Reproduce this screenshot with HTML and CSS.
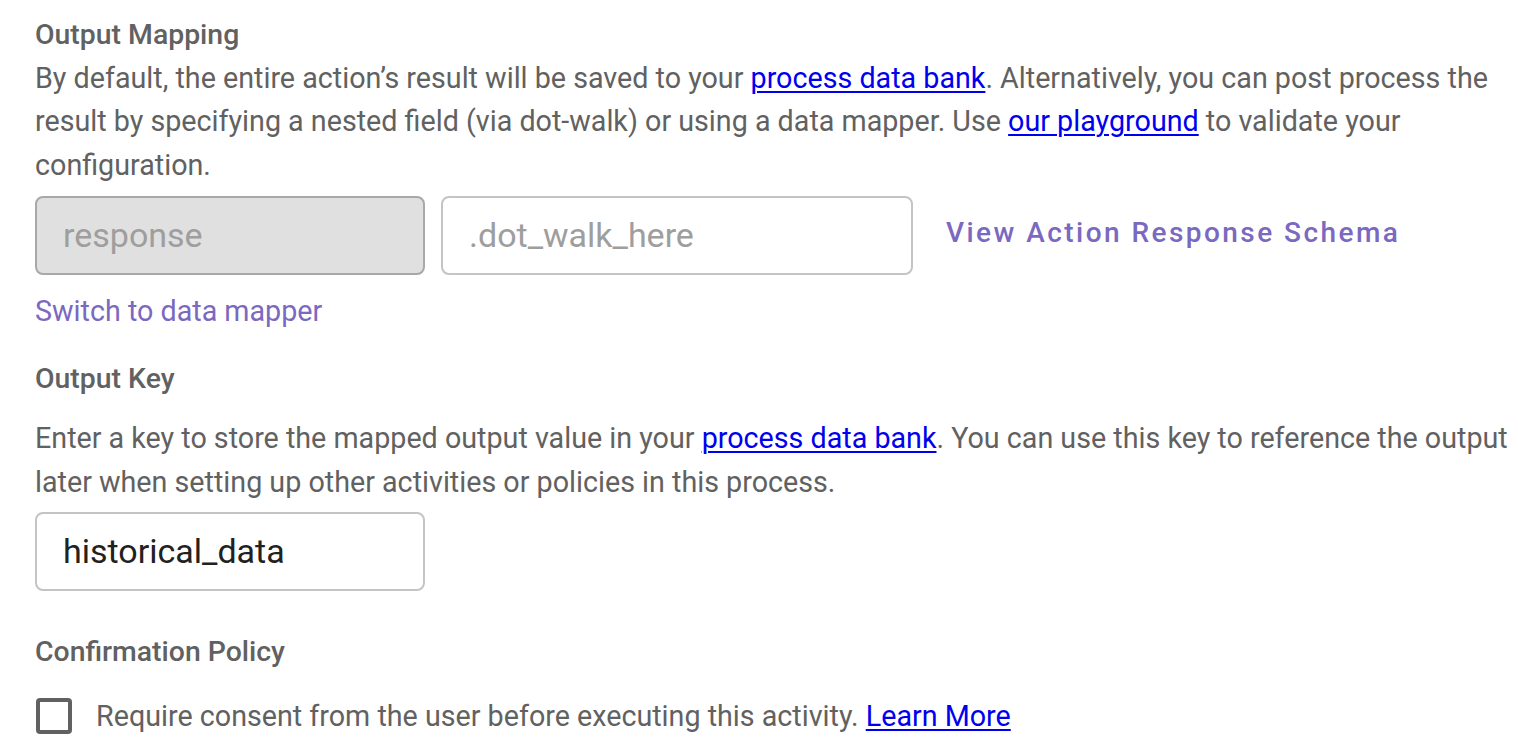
FILE: index.html
```html
<!DOCTYPE html>
<html>
<head>
<meta charset="utf-8">
<link rel="stylesheet" href="styles.css">
</head>
<body>
<div class="page">
  <section class="section">
    <div class="title">Output Mapping</div>
    <p class="desc">By default, the entire action’s result will be saved to your <a href="#">process data bank</a>. Alternatively, you can post process the result by specifying a nested field (via dot-walk) or using a data mapper. Use <a href="#">our playground</a> to validate your configuration.</p>
    <div class="field-row">
      <div class="input input-disabled"><span class="placeholder">response</span></div>
      <div class="input input-wide"><span class="placeholder">.dot_walk_here</span></div>
      <span class="schema-link">View Action Response Schema</span>
    </div>
    <div class="switch-link">Switch to data mapper</div>
  </section>

  <section class="section key-section">
    <div class="title">Output Key</div>
    <p class="desc desc-key">Enter a key to store the mapped output value in your <a href="#">process data bank</a>. You can use this key to reference the output later when setting up other activities or policies in this process.</p>
    <div class="input input-key"><span class="value">historical_data</span></div>
  </section>

  <section class="section policy-section">
    <div class="title">Confirmation Policy</div>
    <label class="check-row">
      <span class="checkbox"></span>
      <span class="check-text">Require consent from the user before executing this activity. <a href="#">Learn More</a></span>
    </label>
  </section>
</div>
</body>
</html>
```

FILE: styles.css
```css
html, body {
  margin: 0;
  padding: 0;
  background: #ffffff;
}
body {
  font-family: Roboto, "Liberation Sans", sans-serif;
  font-size: 28.7px;
  line-height: 43.5px;
  color: #616161;
}
.page {
  padding: 13px 0 0 35px;
}
.title {
  font-weight: 500;
  font-size: 28.4px;
}
.desc {
  margin: 0;
  width: 1483px;
}
.desc a, .check-text a {
  color: #0000ee;
  text-decoration: underline;
  text-decoration-thickness: 2px;
  text-underline-offset: 3px;
}
.field-row {
  display: flex;
  align-items: center;
  margin-top: 9px;
}
.input {
  box-sizing: border-box;
  height: 79px;
  border: 2px solid #c4c4c4;
  border-radius: 8px;
  display: flex;
  align-items: center;
  padding-left: 26px;
  font-size: 34px;
}
.input-disabled {
  width: 390px;
  background: #e0e0e0;
  border-color: #a8a8a8;
}
.input-wide {
  width: 472px;
  margin-left: 16px;
}
.placeholder {
  color: #9e9e9e;
}
.schema-link {
  margin-left: 33px;
  color: #7b68c0;
  font-weight: 500;
  font-size: 28px;
  letter-spacing: 2.45px;
  margin-top: -6px;
}
.switch-link {
  margin-top: 15px;
  color: #7b68c0;
}
.key-section {
  margin-top: 23px;
}
.desc-key {
  margin-top: 17px;
}
.input-key {
  width: 390px;
  margin-top: 8px;
}
.value {
  color: #212121;
}
.policy-section {
  margin-top: 39px;
}
.check-row {
  display: flex;
  align-items: center;
  margin-top: 21px;
}
.checkbox {
  box-sizing: border-box;
  width: 36px;
  height: 36px;
  border: 4px solid #616161;
  border-radius: 4px;
  margin-left: 1px;
  margin-right: 24px;
  flex: none;
}
```
